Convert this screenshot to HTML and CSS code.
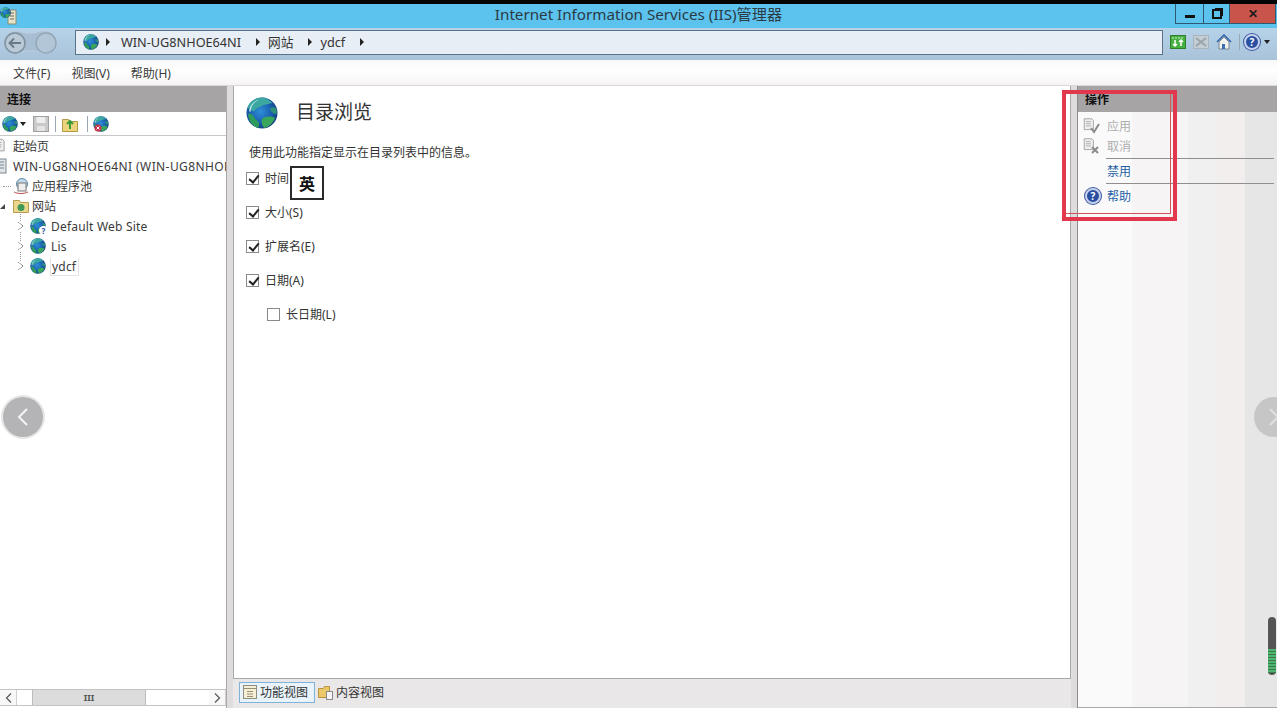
FILE: index.html
```html
<!DOCTYPE html>
<html lang="zh-CN">
<head>
    <meta charset="UTF-8">
    <title>Internet Information Services (IIS)管理器</title>
    <link rel="stylesheet" href="styles.css">
</head>
<body>
    <svg class="defs" width="0" height="0">
        <defs>
            <radialGradient id="sea" cx="45%" cy="45%" r="60%">
                <stop offset="0" stop-color="#2f8fd6"/>
                <stop offset="0.6" stop-color="#1a5fb0"/>
                <stop offset="1" stop-color="#143c78"/>
            </radialGradient>
            <symbol id="globe" viewBox="0 0 32 32">
                <circle cx="16" cy="16" r="15.500" fill="url(#sea)"/>
                <path d="M16 .5C9 .5 3 5 1.500 11c3 1 5 4 7 3 1-3 4-3 7-5 4-2 8-2 11-3C23 2.500 20 .5 16 .5z" fill="#3ca6a0"/>
                <path d="M2 17c2-1 5 0 6 3 1 3 4 3 5 6 0 2 0 4-1 5C7 29.500 3 25 2 17z" fill="#2f9c5c"/>
                <path d="M16 22c4-3 9-3 13-1-2 5-6 9-11 10-2-3-3-6-2-9z" fill="#38a75c"/>
                <path d="M24 11c2-1 4-1 6 0 1 2 1 4 .5 6-3 0-6-2-6.500-6z" fill="#2e8f7a"/>
                <path d="M3 14C4 8 8 4 13 2.500 8 5 5 9 4.500 15z" fill="#bfe6f0"/>
            </symbol>
            <symbol id="doc" viewBox="0 0 18 16">
                <path d="M1.500 .5h9l2 2v11h-11z" fill="#eee" stroke="#9a9a9a"/>
                <path d="M3.500 4h6M3.500 6.500h6M3.500 9h6" stroke="#a8a8a8"/>
            </symbol>
        </defs>
    </svg>

    <div class="topline"></div>

    <header class="titlebar">
        <svg class="app-icon" width="18" height="20" viewBox="0 0 18 20">
            <rect x="8" y="5" width="8" height="14" fill="#e8e4c8" stroke="#8a8a70"/>
            <path d="M10 8h4M10 11h4M10 14h4" stroke="#666"/>
            <use href="#globe" x="0" y="2" width="11" height="11"/>
        </svg>
        <span class="title-text">Internet Information Services (IIS)管理器</span>
        <div class="win-buttons">
            <div class="win-btn win-min"><span class="min-bar"></span></div>
            <div class="win-btn win-max"><span class="max-box"></span></div>
            <div class="win-btn win-close">✕</div>
        </div>
    </header>

    <nav class="navbar">
        <div class="nav-arrows">
            <svg width="58" height="28" viewBox="0 0 58 28">
                <path d="M1 14C1 7 7 3 13 3c5 0 7 2 10 2h8c3 0 5-2 11-2 6 0 12 4 12 11s-6 11-12 11c-6 0-8-2-11-2h-8c-3 0-5 2-10 2-6 0-12-4-12-11z" fill="#a8bed2" stroke="#bccfe0"/>
                <circle cx="12" cy="15" r="10" fill="#b9c9d6" stroke="#7f919f" stroke-width="1.500"/>
                <path d="M18 15H7M11 10.500L6.500 15l4.500 4.500" fill="none" stroke="#6a7a85" stroke-width="1.800"/>
                <circle cx="43" cy="15" r="10" fill="#b2c6d7" stroke="#94a8b8" stroke-width="1.500"/>
            </svg>
        </div>
        <div class="address">
            <svg class="addr-globe" width="16" height="16"><use href="#globe" width="16" height="16"/></svg>
            <span class="crumb-arrow first"></span><span>WIN-UG8NHOE64NI</span>
            <span class="crumb-arrow"></span><span>网站</span>
            <span class="crumb-arrow"></span><span>ydcf</span>
            <span class="crumb-arrow"></span>
        </div>
        <div class="nav-tools">
            <svg width="16" height="16" viewBox="0 0 16 16">
                <rect x=".5" y="1.500" width="15" height="13" fill="#46b040" stroke="#2f7f2c"/>
                <path d="M2 4h12" stroke="#c8eec4" stroke-dasharray="2 1"/>
                <path d="M5 6v6M3 10l2 2 2-2M11 12V6M9 8l2-2 2 2" fill="none" stroke="#fff" stroke-width="1.500"/>
            </svg>
            <svg width="16" height="16" viewBox="0 0 16 16">
                <rect x=".5" y="1.500" width="15" height="13" fill="#c4cdd4" stroke="#aab4bc"/>
                <path d="M3 4l10 8M13 4L3 12" stroke="#9aa4ab" stroke-width="2"/>
            </svg>
            <svg width="16" height="16" viewBox="0 0 16 16">
                <path d="M1 8l7-7 7 7" fill="none" stroke="#2f5fa8" stroke-width="1.500"/>
                <path d="M3 8l5-5 5 5v7H3z" fill="#f2f2ee" stroke="#7d8790"/>
                <rect x="6" y="10" width="3" height="5" fill="#3d6fb4"/>
            </svg>
            <span class="tool-sep nav-sep"></span>
            <span class="help-icon">?</span>
            <span class="caret"></span>
        </div>
    </nav>

    <div class="menubar">
        <span class="menu-item">文件(F)</span>
        <span class="menu-item">视图(V)</span>
        <span class="menu-item">帮助(H)</span>
    </div>

    <main class="workspace">
        <aside class="left-panel">
            <div class="panel-head">连接</div>
            <div class="toolbar">
                <svg width="16" height="16"><use href="#globe" width="16" height="16"/></svg>
                <span class="caret tool-caret"></span>
                <svg class="tool-save" width="16" height="16" viewBox="0 0 16 16">
                    <rect x=".5" y=".5" width="15" height="15" fill="#c9c9c9" stroke="#a0a0a0"/>
                    <rect x="3.500" y="1" width="9" height="6" fill="#eee"/>
                    <rect x="4" y="10" width="8" height="5" fill="#e4e4e4"/>
                </svg>
                <span class="tool-sep"></span>
                <svg width="16" height="16" viewBox="0 0 16 16">
                    <path d="M.5 3.500h6l1 2h8v10H.5z" fill="#ecd47c" stroke="#b49a48"/>
                    <path d="M8 13V6M5 8l3-3 3 3" fill="none" stroke="#3c9a3c" stroke-width="2"/>
                </svg>
                <span class="tool-sep sep-wide"></span>
                <svg width="16" height="16" viewBox="0 0 16 16">
                    <use href="#globe" width="16" height="16"/>
                    <circle cx="5" cy="12" r="3.500" fill="#c8324a"/>
                    <path d="M3.500 10.500l3 3M6.500 10.500l-3 3" stroke="#fff"/>
                </svg>
            </div>
            <ul class="tree">
                <li class="tree-row depth-0">
                    <svg class="tree-icon cut" width="16" height="16"><use href="#doc" width="16" height="16"/></svg>
                    <span>起始页</span>
                </li>
                <li class="tree-row depth-0 server">
                    <svg class="tree-icon cut" width="16" height="16" viewBox="0 0 16 16">
                        <rect x="3" y="1" width="10" height="14" fill="#dfe4e8" stroke="#7c8790"/>
                        <path d="M5 4h6M5 7h6M5 10h6" stroke="#7c8790"/>
                    </svg>
                    <span>WIN-UG8NHOE64NI (WIN-UG8NHOE64NI\Administrator)</span>
                </li>
                <li class="tree-row depth-1 pool">
                    <svg class="tree-icon" width="16" height="16" viewBox="0 0 16 16">
                        <circle cx="9" cy="6" r="5.500" fill="#bfd9ea" stroke="#5f8ba8"/>
                        <rect x="5" y="5" width="8" height="8" fill="#eee" stroke="#777"/>
                        <path d="M1 14c4 2 10 2 14 0" fill="none" stroke="#b24a4a"/>
                    </svg>
                    <span>应用程序池</span>
                </li>
                <li class="tree-row depth-1">
                    <span class="expander open"></span>
                    <svg class="tree-icon" width="16" height="16" viewBox="0 0 16 16">
                        <path d="M.5 2.500h6l1 2h8v10H.5z" fill="#ecd78e" stroke="#b79c50"/>
                        <circle cx="8" cy="9.500" r="3.500" fill="#3f9a58"/>
                    </svg>
                    <span>网站</span>
                </li>
                <li class="tree-row depth-2">
                    <span class="expander"></span>
                    <span class="globe-wrap">
                        <svg class="tree-icon" width="16" height="16"><use href="#globe" width="16" height="16"/></svg>
                        <span class="site-badge">?</span>
                    </span>
                    <span class="site-name">Default Web Site</span>
                </li>
                <li class="tree-row depth-2">
                    <span class="expander"></span>
                    <svg class="tree-icon" width="16" height="16"><use href="#globe" width="16" height="16"/></svg>
                    <span class="site-name">Lis</span>
                </li>
                <li class="tree-row depth-2">
                    <span class="expander"></span>
                    <svg class="tree-icon" width="16" height="16"><use href="#globe" width="16" height="16"/></svg>
                    <span class="site-name selected">ydcf</span>
                </li>
            </ul>
            <div class="hscroll">
                <span class="hs-btn">
                    <svg width="7" height="10" viewBox="0 0 7 10"><path d="M6 .5L1.500 5 6 9.500" fill="none" stroke="#555" stroke-width="1.200"/></svg>
                </span>
                <span class="hs-track"><span class="hs-thumb">III</span></span>
                <span class="hs-btn">
                    <svg width="7" height="10" viewBox="0 0 7 10"><path d="M1 .5L5.500 5 1 9.500" fill="none" stroke="#555" stroke-width="1.200"/></svg>
                </span>
            </div>
        </aside>

        <div class="splitter"></div>

        <section class="center">
            <div class="feature">
                <div class="feature-head">
                    <svg width="32" height="32"><use href="#globe" width="32" height="32"/></svg>
                    <h1 class="feature-title">目录浏览</h1>
                </div>
                <p class="feature-desc">使用此功能指定显示在目录列表中的信息。</p>
                <div class="options">
                    <div class="option"><span class="check on"></span><span>时间</span></div>
                    <div class="option"><span class="check on"></span><span>大小(S)</span></div>
                    <div class="option"><span class="check on"></span><span>扩展名(E)</span></div>
                    <div class="option"><span class="check on"></span><span>日期(A)</span></div>
                    <div class="option sub"><span class="check"></span><span>长日期(L)</span></div>
                </div>
            </div>
            <div class="view-tabs">
                <div class="view-tab active">
                    <svg width="16" height="16" viewBox="0 0 16 16">
                        <rect x="1.500" y="1.500" width="13" height="13" fill="#f6efd8" stroke="#8c8c80"/>
                        <path d="M1.500 4.500h13M5 7.500h6M5 10h6M5 12.500h6" stroke="#9b8f70"/>
                    </svg>
                    <span>功能视图</span>
                </div>
                <div class="view-tab">
                    <svg width="16" height="16" viewBox="0 0 16 16">
                        <path d="M.5 4.500h5l1-2h5v11H.5z" fill="#edc868" stroke="#b69440"/>
                        <rect x="8.500" y="7.500" width="6" height="8" fill="#f4f4f4" stroke="#8a8a8a"/>
                    </svg>
                    <span>内容视图</span>
                </div>
            </div>
        </section>

        <div class="splitter"></div>

        <aside class="right-panel">
            <div class="panel-head actions-head">操作</div>
            <div class="actions">
                <div class="action disabled">
                    <svg width="17" height="16" viewBox="0 0 17 16">
                        <use href="#doc" width="15" height="14"/>
                        <path d="M8 10l3 4 5-8" fill="none" stroke="#8b8b8b" stroke-width="2"/>
                    </svg>
                    <span>应用</span>
                </div>
                <div class="action disabled">
                    <svg width="17" height="16" viewBox="0 0 17 16">
                        <use href="#doc" width="15" height="14"/>
                        <path d="M9 9l6 6M15 9l-6 6" stroke="#8b8b8b" stroke-width="2"/>
                    </svg>
                    <span>取消</span>
                </div>
                <div class="action-line"></div>
                <div class="action link no-icon"><span>禁用</span></div>
                <div class="action-line"></div>
                <div class="action link help-row">
                    <span class="help-icon">?</span>
                    <span>帮助</span>
                </div>
            </div>
        </aside>
    </main>

    <!-- things lying over the window -->
    <div class="ime-box">英</div>
    <div class="mark-outer"><div class="mark-inner"></div></div>
    <div class="round-btn prev">
        <svg width="14" height="20" viewBox="0 0 14 20"><path d="M11 2L3 10l8 8" fill="none" stroke="#f4f4f4" stroke-width="2"/></svg>
    </div>
    <div class="round-btn next">
        <svg width="14" height="20" viewBox="0 0 14 20"><path d="M3 2l8 8-8 8" fill="none" stroke="#e0e0e0" stroke-width="2"/></svg>
    </div>
    <div class="level"><span class="level-fill"></span></div>
</body>
</html>
```

FILE: styles.css
```css
* {
    box-sizing: border-box;
}
html, body {
    margin: 0;
    height: 100%;
}
body {
    position: relative;
    display: flex;
    flex-direction: column;
    height: 708px;
    overflow: hidden;
    font-family: "Noto Sans", "Noto Sans CJK SC", sans-serif;
    font-size: 12px;
    color: #333;
    background-color: #f0f0f0;
}
svg {
    display: block;
    flex: none;
}
.defs {
    position: absolute;
}
.topline {
    height: 4px;
    flex: none;
    background-color: #050505;
}

/* title bar */
.titlebar {
    position: relative;
    display: flex;
    justify-content: center;
    align-items: center;
    height: 24px;
    flex: none;
    padding: 0 0 6px 0;
    background-color: #5cc2ee;
}
.app-icon {
    position: absolute;
    left: 0;
    top: 1px;
}
.title-text {
    font-size: 15.200px;
    color: #2b3a44;
}
.win-buttons {
    position: absolute;
    right: 1px;
    top: 0;
    display: flex;
    height: 20px;
}
.win-btn {
    display: flex;
    justify-content: center;
    align-items: center;
    border: 1px solid #2d5a70;
    border-top: 0;
}
.win-min {
    width: 28px;
    border-right: 0;
}
.win-max {
    width: 26px;
    border-right: 0;
}
.win-close {
    width: 47px;
    background-color: #c9544c;
    color: #1a1a1a;
    font-size: 12px;
    font-weight: bold;
}
.min-bar {
    display: block;
    width: 10px;
    height: 3px;
    margin-top: 5px;
    background-color: #111;
}
.max-box {
    display: block;
    width: 10px;
    height: 10px;
    border: 2px solid #111;
    box-shadow: 2px -2px 0 -1px #111;
}

/* address bar */
.navbar {
    display: flex;
    align-items: center;
    height: 32px;
    flex: none;
    padding: 0 0 4px 3px;
    background: linear-gradient(#b6d3ea, #a8c2da);
}
.nav-arrows {
    width: 72px;
}
.address {
    display: flex;
    align-items: center;
    width: 1088px;
    height: 25px;
    padding: 0 0 1px 7px;
    background-color: #e8eef5;
    border: 1px solid #5b7388;
    font-size: 12.700px;
    color: #333;
}
.crumb-arrow {
    width: 0;
    height: 0;
    margin: 0 8px 0 15px;
    border-left: 4px solid #222;
    border-top: 4px solid transparent;
    border-bottom: 4px solid transparent;
}
.crumb-arrow.first {
    margin: 0 11px 0 7px;
}
.nav-tools {
    display: flex;
    align-items: center;
    gap: 7px;
    margin-left: 7px;
}
.tool-sep {
    width: 1px;
    height: 16px;
    background-color: #9aa7b4;
}
.nav-sep {
    margin-right: -3px;
}
.help-icon {
    display: inline-flex;
    justify-content: center;
    align-items: center;
    width: 16px;
    height: 16px;
    flex: none;
    border-radius: 50%;
    border: 2px solid #c8d2ee;
    background-color: #2a4ea0;
    color: #fff;
    font-size: 10px;
    font-weight: bold;
    box-shadow: 0 0 0 1px #3d5a9c;
}
.caret {
    width: 0;
    height: 0;
    margin-left: -3px;
    border-top: 4px solid #222;
    border-left: 3px solid transparent;
    border-right: 3px solid transparent;
}

/* menu */
.menubar {
    display: flex;
    gap: 21px;
    align-items: center;
    height: 25px;
    flex: none;
    padding-left: 13px;
    background: linear-gradient(#f8f8f8, #ffffff 40%, #f6f3f3);
    color: #3a3a3a;
}
.menu-item {
    white-space: nowrap;
}

/* main area */
.workspace {
    display: flex;
    flex: 1;
    min-height: 0;
    border-top: 1px solid #d8d8d8;
}
.splitter {
    width: 6px;
    flex: none;
    background-color: #dedcdc;
}
.panel-head {
    display: flex;
    align-items: center;
    height: 26px;
    flex: none;
    padding-left: 7px;
    background-color: #a6a4a4;
    color: #111;
    font-weight: bold;
}
.left-panel {
    display: flex;
    flex-direction: column;
    width: 227px;
    flex: none;
    background-color: #fff;
    border-right: 1px solid #a9a9a9;
}
.toolbar {
    display: flex;
    align-items: center;
    gap: 6px;
    height: 24px;
    flex: none;
    padding-left: 2px;
    border-bottom: 1px solid #c8c8c8;
}
.tool-caret {
    margin-left: -4px;
}
.tool-save {
    margin-left: 1px;
}
.sep-wide {
    margin-left: 3px;
    margin-right: -1px;
}
.tree {
    flex: 1;
    margin: 0;
    padding: 0;
    list-style: none;
    overflow: hidden;
    color: #3a3a3a;
}
.tree-row {
    position: relative;
    display: flex;
    align-items: center;
    gap: 3px;
    height: 20px;
    white-space: nowrap;
}
.tree-icon.cut {
    margin-left: -7px;
}
.depth-0 {
    gap: 4px;
}
.server {
    letter-spacing: .4px;
}
.depth-1 {
    padding-left: 13px;
}
.depth-1 .expander {
    margin-left: -13px;
    margin-right: 5px;
}
/* dotted tree lines */
.pool::before {
    content: "";
    position: absolute;
    left: 3px;
    top: 10px;
    width: 8px;
    border-top: 1px dotted #999;
}
.depth-2::before {
    content: "";
    position: absolute;
    left: 20px;
    top: -4px;
    height: 9px;
    border-left: 1px dotted #999;
}
.depth-2 {
    padding-left: 18px;
    gap: 7px;
}
.expander {
    width: 0;
    height: 0;
    flex: none;
    border-left: 5px solid #fff;
    border-top: 4px solid transparent;
    border-bottom: 4px solid transparent;
    filter: drop-shadow(0 0 .6px #000) drop-shadow(0 0 .4px #000);
}
.expander.open {
    border-left: 5px solid transparent;
    border-top: 0;
    border-bottom: 5px solid #444;
    filter: none;
}
.globe-wrap {
    position: relative;
    display: block;
}
.site-badge {
    position: absolute;
    right: -2px;
    bottom: -1px;
    width: 9px;
    height: 9px;
    border-radius: 50%;
    background-color: #fff;
    color: #2a4ea0;
    font-size: 8px;
    line-height: 9px;
    text-align: center;
    font-weight: bold;
}
.site-name {
    margin-left: -3px;
    padding: 0 2px 0 1px;
    letter-spacing: .2px;
}
.selected {
    margin-top: 2px;
    border: 1px solid #e4e4e4;
    border-top: 0;
}
.hscroll {
    display: flex;
    height: 17px;
    flex: none;
    margin-bottom: 2px;
    border-top: 1px solid #c4c4c4;
    border-bottom: 1px solid #c4c4c4;
}
.hs-btn {
    display: flex;
    justify-content: center;
    align-items: center;
    width: 17px;
    flex: none;
    background-color: #f8f8f8;
    border-right: 1px solid #d0d0d0;
}
.hs-track {
    display: flex;
    flex: 1;
    padding-left: 15px;
    background-color: #fff;
}
.hs-thumb {
    display: flex;
    justify-content: center;
    align-items: center;
    width: 114px;
    background-color: #dcdcdc;
    border: 1px solid #bcbcbc;
    border-width: 0 1px;
    color: #555;
    font-size: 9px;
    font-weight: bold;
}

/* center panel */
.center {
    display: flex;
    flex-direction: column;
    flex: 1;
    min-width: 0;
}
.feature {
    flex: 1;
    padding: 11px 0 0 12px;
    background-color: #fff;
    border: 1px solid #a8a8a8;
    border-top: 0;
}
.feature-head {
    display: flex;
    align-items: center;
    gap: 18px;
    height: 32px;
}
.feature-title {
    margin: 0;
    padding-bottom: 4px;
    font-size: 19px;
    font-weight: normal;
    color: #333;
}
.feature-desc {
    margin: 15px 0 0 3px;
    line-height: 17px;
}
.options {
    display: flex;
    flex-direction: column;
    gap: 14px;
    margin-top: 7px;
}
.option {
    display: flex;
    align-items: center;
    gap: 6px;
    height: 20px;
}
.option.sub {
    padding-left: 21px;
}
.check {
    position: relative;
    width: 13px;
    height: 13px;
    flex: none;
    background-color: #fff;
    border: 1px solid #8a8a8a;
}
.check.on::after {
    content: "";
    position: absolute;
    left: 3.500px;
    top: .5px;
    width: 4px;
    height: 8px;
    border: solid #222;
    border-width: 0 2px 2px 0;
    transform: rotate(40deg);
}
.view-tabs {
    display: flex;
    align-items: center;
    height: 29px;
    flex: none;
    padding: 0 0 3px 6px;
    background-color: #e9e7e7;
}
.view-tab {
    display: flex;
    align-items: center;
    gap: 2px;
    height: 21px;
    padding: 0 2px;
    border: 1px solid transparent;
    white-space: nowrap;
}
.view-tab.active {
    width: 76px;
    background-color: #e8f3fb;
    border-color: #7fb2d8;
}

/* right panel */
.right-panel {
    display: flex;
    flex-direction: column;
    width: 200px;
    flex: none;
    border-left: 1px solid #8c8c8c;
    border-bottom: 1px solid #a8a8a8;
    background: linear-gradient(90deg, #fafafa 0, #fafafa 54px, #f6f4f4 54px, #f6f4f4 110px, #f0f0f0 110px, #f0f0f0 139px, #f2eeee 139px, #f2eeee 167px, #e6e6e6 167px, #e6e6e6 100%);
}
.actions-head {
    padding-left: 7px;
}
.actions {
    padding: 4px 3px 0 5px;
}
.action {
    display: flex;
    align-items: center;
    gap: 7px;
    height: 20px;
}
.action.disabled {
    color: #aeaeae;
}
.action.link {
    margin-top: 2px;
    color: #1d5fa5;
}
.action.no-icon {
    padding-left: 24px;
}
.action.help-row {
    gap: 6px;
}
.action .help-icon {
    margin-left: 2px;
}
.action-line {
    height: 1px;
    margin: 2px 0 0 23px;
    background-color: #8f8f8f;
}

/* overlays */
.ime-box {
    position: absolute;
    left: 290px;
    top: 166px;
    display: flex;
    justify-content: center;
    align-items: center;
    width: 34px;
    height: 34px;
    background-color: #fff;
    border: 2px solid #2a2a2a;
    color: #111;
    font-size: 16px;
    font-weight: bold;
}
.mark-outer {
    position: absolute;
    left: 1062px;
    top: 90px;
    width: 115px;
    height: 131px;
    border: 4px solid #e2384e;
}
.mark-inner {
    width: 105px;
    height: 120px;
    border: solid #d0525f;
    border-width: 0 1px 1px 0;
}
.round-btn {
    position: absolute;
    top: 397px;
    display: flex;
    justify-content: center;
    align-items: center;
    width: 40px;
    height: 40px;
    border-radius: 50%;
    background-color: #b4b4b6;
    box-shadow: 0 0 0 2px #e6e6e6;
}
.round-btn.prev {
    left: 3px;
}
.round-btn.next {
    left: 1254px;
    background-color: #c6c6c6;
    justify-content: flex-start;
    padding-left: 13px;
}
.level {
    position: absolute;
    left: 1268px;
    top: 617px;
    display: flex;
    align-items: flex-end;
    width: 8px;
    height: 58px;
    padding-bottom: 2px;
    border-radius: 4px;
    background-color: #555;
    box-shadow: 0 0 0 1px #e8e8e8;
}
.level-fill {
    display: block;
    width: 100%;
    height: 24px;
    background: repeating-linear-gradient(#4fb56e 0, #4fb56e 2px, #3b7a50 2px, #3b7a50 3px);
}
```
